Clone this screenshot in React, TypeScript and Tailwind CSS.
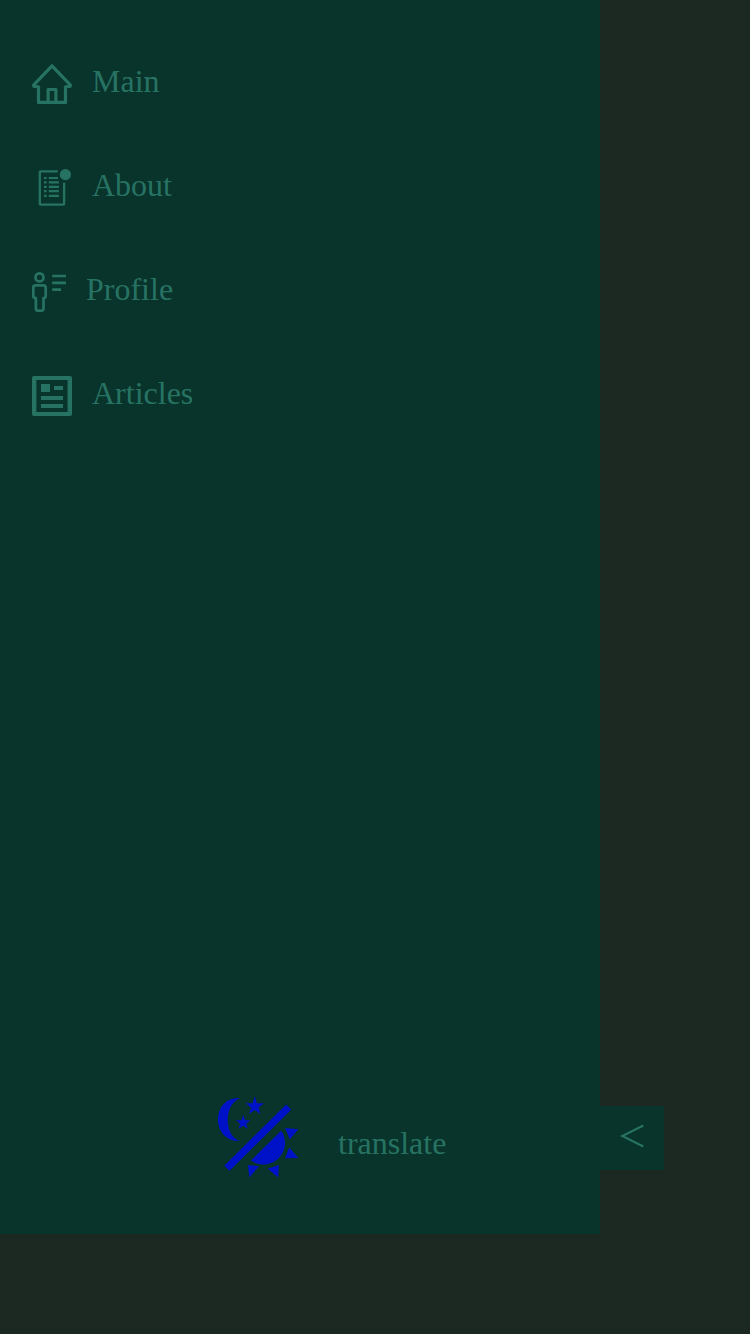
import React from "react";

const HomeIcon = () => (
  <svg className="h-10 w-10" viewBox="0 0 40 40" fill="none" stroke="currentColor" strokeWidth="3.2" strokeLinejoin="round">
    <path d="M6.5 21.8v16.6h27V21.8M6.5 22.5H2.2q-1-.9-.2-1.8L20 1.8l18 18.9q.8.9-.2 1.8h-4.3" />
    <path d="M16.1 38V25.5h7.8V38" />
  </svg>
);

const AboutIcon = () => (
  <svg className="h-10 w-10" viewBox="0 0 40 40" fill="none" stroke="currentColor">
    <path d="M25.8 3.3H8.8q-1 0-1 1v31.4q0 1 1 1h22.3q1 0 1-1V14.8" strokeWidth="2.3" />
    <path d="M12 10h2.6M12 14.4h2.6M12 18.8h2.6M12 23.2h2.6M12 27.8h2.6M16.8 10h9.2M16.8 14.4h10.1M16.8 18.8h10.1M16.8 23.2h10.1M16.8 27.8h10.1" strokeWidth="2.2" />
    <circle cx="33.4" cy="6.6" r="5.6" fill="currentColor" stroke="none" />
  </svg>
);

const ProfileIcon = () => (
  <svg className="h-10 w-[34px]" viewBox="0 0 34 40" fill="none" stroke="currentColor" strokeWidth="2.7" strokeLinejoin="round">
    <circle cx="7.5" cy="5.4" r="4" />
    <path d="M3.6 13.4h7.8q2.3 0 2.3 2.3v8.2q0 2-2.2 2.1v10.8q0 1.9-1.9 1.9H5.8q-1.9 0-1.9-1.9V26q-2.6 0-2.6-2.1v-8.2q0-2.3 2.3-2.3Z" />
    <path d="M20.2 4H34M20.2 10.9H34M20.2 17.7h8.9" />
  </svg>
);

const ArticlesIcon = () => (
  <svg className="h-10 w-10" viewBox="0 0 40 40" fill="currentColor">
    <path fillRule="evenodd" d="M2 0h36q2 0 2 2v36q0 2-2 2H2q-2 0-2-2V2q0-2 2-2Zm2.4 4v32h31.2V4Z" />
    <path d="M9 8h9v8H9zM22 10h9v4h-9zM9 20h22v4H9zM9 28h22v4H9z" />
  </svg>
);

const ThemeIcon = () => (
  <svg className="h-20 w-20 overflow-visible text-[#0012c8]" viewBox="0 0 80 80" fill="currentColor">
    <path d="M22 1C7.5.5 0 11 0 22.7 0 34.8 9 45 22 43.9 13.8 41.2 9.8 33 9.8 22.7S14.2 4.5 22 1Z" />
    <path d="m36.8-.8 2.2 7.1h7l-5.5 4.2 2 6.5-5.7-4.1-5.8 4.1 2-6.6-5.4-4.1h7ZM25.2 17.8l1.8 5.5h5.4l-4.2 3.4 1.6 5.1-4.6-3.1-4.6 3.1 1.6-5.1-4.2-3.4h5.4Z" />
    <path d="m68.2 7.5 5 5.2-61.7 61-5.2-5ZM63.2 33.8A21.5 21.5 0 0 1 33 63.5Z" />
    <path d="m67.1 31 13.2 1.3-8.6 10.1ZM71.3 50.6l9 10.4-13.3.3ZM29.9 68.3l11.3.7-9.8 11.4ZM49.8 71.8l11-3.7-.7 12.3Z" />
  </svg>
);

const links = [
  { label: "Main", Icon: HomeIcon },
  { label: "About", Icon: AboutIcon },
  { label: "Profile", Icon: ProfileIcon },
  { label: "Articles", Icon: ArticlesIcon },
];

export default function App() {
  return (
    <div className="flex h-[1334px] w-[750px] flex-col overflow-hidden bg-[#1c2822] font-['Liberation_Serif',serif] text-[32px] leading-[34px] text-[#277363]">
      <div className="flex h-[1234px] items-end">
        <aside className="flex h-full w-[600px] flex-col justify-between bg-[#09342b]">
          <nav className="flex flex-col gap-16 px-8 pt-16">
            {links.map(({ label, Icon }) => (
              <a key={label} href="#" className="flex h-10 items-start gap-5">
                <Icon />
                <span>{label}</span>
              </a>
            ))}
          </nav>
          <div className="flex h-[137px] items-start gap-10 pl-[218px]">
            <button aria-label="Toggle theme"><ThemeIcon /></button>
            <button className="mt-[29px]">translate</button>
          </div>
        </aside>
        <button aria-label="Collapse menu" className="mb-16 flex h-16 w-16 items-center justify-center bg-[#09342b] pb-1">
          <svg className="h-6 w-6" viewBox="0 0 24 24" fill="none" stroke="currentColor" strokeWidth="2.2">
            <path d="M23.3 1.5 2.3 12l21 10.5" />
          </svg>
        </button>
      </div>
    </div>
  );
}
